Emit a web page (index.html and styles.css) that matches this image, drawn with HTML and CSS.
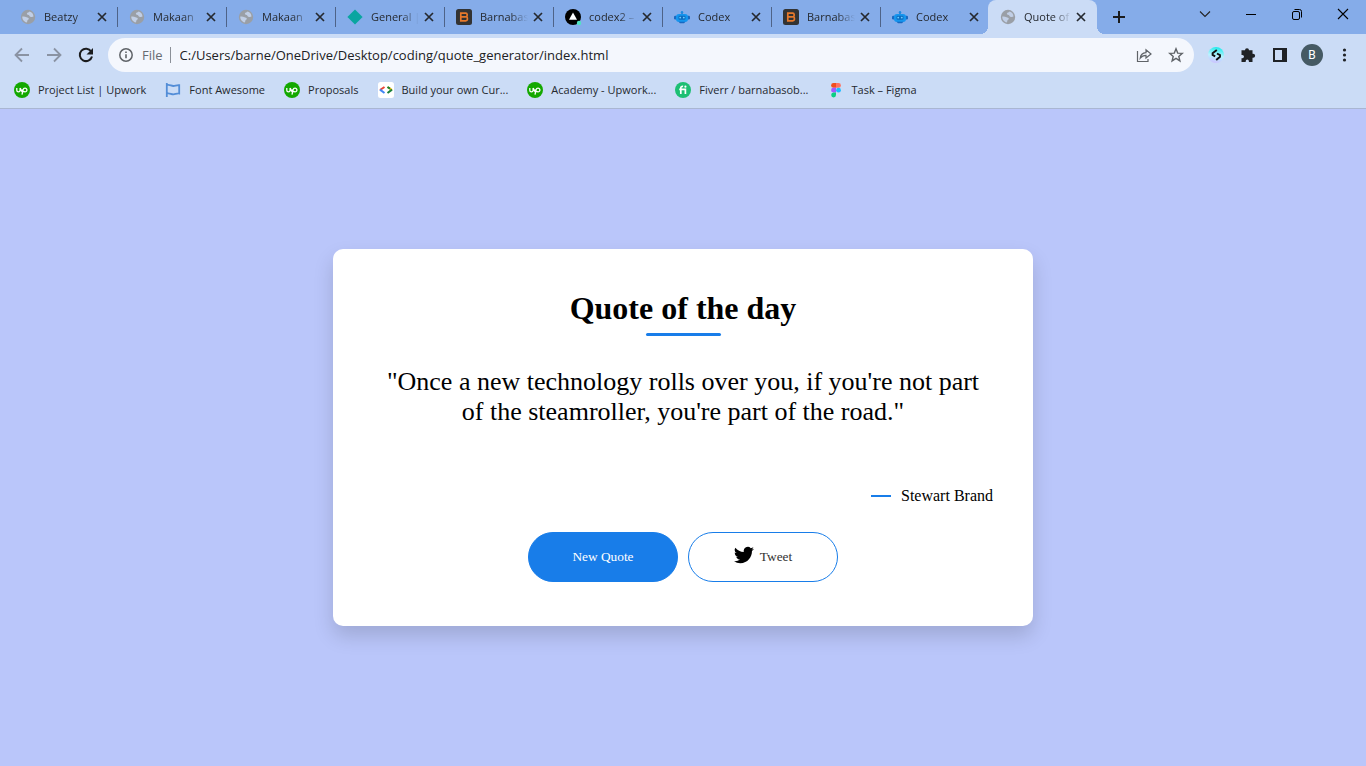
FILE: index.html
```html
<!DOCTYPE html>
<html lang="en">
<head>
<meta charset="utf-8">
<title>Quote of the day</title>
<link rel="stylesheet" href="styles.css">
</head>
<body>
<svg class="sprite" aria-hidden="true">
  <symbol id="globe" viewBox="0 0 16 16"><circle cx="8" cy="8" r="7.2" fill="#9a9fa6"/><path d="M2.300 7.600c1.700-.4 3 .2 4.200.7 1 .4 2.300.3 2.300 1.400 0 1-1.200 1-1.400 1.900-.1.800-.1 1.500-.8 2C4 12.800 2 10.400 2.300 7.600zM9.600 2.600c-.5.9-2.400.8-2.700 1.900-.2 1 .9 1.300 1.700 1.500.9.300.6 1.400 1.600 1.700 1.200.3 2.100.5 3.300-.1C13.400 5 12 3.200 9.600 2.600z" fill="#cbdbf6" opacity=".8"/></symbol>
  <symbol id="diamond" viewBox="0 0 16 16"><path d="M8 .4 15.600 8 8 15.600.4 8z" fill="#0aa5a0"/></symbol>
  <symbol id="bold-b" viewBox="0 0 16 16"><rect width="16" height="16" rx="2.500" fill="#333"/><path d="M4.800 4.200h5c1.600 0 1.900 2.600.6 3.600 1.600.8 1.400 4-.6 4h-5zM4.800 7.900h5" fill="none" stroke="#e8792b" stroke-width="1.700"/></symbol>
  <symbol id="triangle" viewBox="0 0 16 16"><circle cx="8" cy="8" r="8" fill="#000"/><path d="M8 3.500 12 10.800H4z" fill="#fff"/><circle cx="14" cy="14" r="2.200" fill="#50e3c2"/></symbol>
  <symbol id="robot" viewBox="0 0 16 16"><path d="M7.400 3h1.200v3H7.400z" fill="#1769c2"/><circle cx="8" cy="3.200" r="1.200" fill="#1c8be0"/><rect x="0" y="6.800" width="3" height="3.600" rx="1.200" fill="#1769c2"/><rect x="13" y="6.800" width="3" height="3.600" rx="1.200" fill="#1769c2"/><rect x="2" y="5" width="12" height="8" rx="3" fill="#1595ee"/><rect x="4.500" y="6.800" width="7" height="4" rx="1.200" fill="#0f6cc0"/><circle cx="6.200" cy="8.600" r=".9" fill="#6fd0ff"/><circle cx="9.800" cy="8.600" r=".9" fill="#6fd0ff"/><path d="M4.500 12.800h7l-1.500 1.400H6z" fill="#1769c2"/></symbol>
  <symbol id="close" viewBox="0 0 16 16"><path d="M4 4l8 8M12 4l-8 8" stroke="currentColor" stroke-width="1.700"/></symbol>
  <symbol id="upwork" viewBox="0 0 16 16"><circle cx="8" cy="8" r="8" fill="#14a800"/><path d="M2.800 6v2.200a1.600 1.600 0 0 0 3.300 0V6M6.200 6c.5 1.700 1.200 3 2.200 3.900M8 12.600l1-4.700c.3-1.200 1-1.800 2-1.800a1.900 1.900 0 1 1 0 3.800c-1.200 0-2.300-.9-3.400-2.300" fill="none" stroke="#fff" stroke-width="1.300"/></symbol>
  <symbol id="flag" viewBox="0 0 16 16"><path d="M1.800 1v14M1.800 3.200c2.400-1 4.400.9 6.600.8 2-.1 3.400-1.200 5.800-.9v8.400c-2.400-.3-3.800.8-5.800.9-2.200.1-4.200-1.800-6.600-.8" fill="none" stroke="#538dd7" stroke-width="1.800"/></symbol>
  <symbol id="code" viewBox="0 0 16 16"><rect width="16" height="16" rx="2.500" fill="#fff"/><g fill="none" stroke-width="2"><path d="M6.500 5 2 8" stroke="#ea4335"/><path d="M2 7.600 6.500 11" stroke="#4285f4"/><path d="M9.500 5 14 8" stroke="#fbbc04"/><path d="M9.500 5 12 6.700M14 7.600 9.500 11" stroke="#188038"/></g></symbol>
  <symbol id="fiverr" viewBox="0 0 16 16"><circle cx="8" cy="8" r="8" fill="#1dbf73"/><path d="M5.800 12V6.200c0-1.500.9-2 2.300-1.800M4.200 7.400h6.200V12" fill="none" stroke="#fff" stroke-width="1.700"/><circle cx="10.400" cy="4.700" r="1.100" fill="#fff"/></symbol>
  <symbol id="figma" viewBox="0 0 16 16"><path d="M8 1H5.500a2.400 2.400 0 0 0 0 4.800H8z" fill="#f24e1e"/><path d="M8 1h2.500a2.400 2.400 0 0 1 0 4.800H8z" fill="#ff7262"/><path d="M8 5.800H5.500a2.400 2.400 0 0 0 0 4.800H8z" fill="#a259ff"/><circle cx="10.500" cy="8.200" r="2.400" fill="#1abcfe"/><path d="M8 10.600H5.500A2.400 2.400 0 1 0 8 13z" fill="#0acf83"/></symbol>
</svg>

<header class="browser">
  <div class="tabstrip">
    <div class="tabs">
      <div class="tab"><svg class="icon"><use href="#globe"/></svg><span class="tab-title">Beatzy</span><button class="tab-close" aria-label="Close Beatzy"><svg class="icon"><use href="#close"/></svg></button></div>
      <div class="tab"><svg class="icon"><use href="#globe"/></svg><span class="tab-title">Makaan</span><button class="tab-close" aria-label="Close Makaan"><svg class="icon"><use href="#close"/></svg></button></div>
      <div class="tab"><svg class="icon"><use href="#globe"/></svg><span class="tab-title">Makaan</span><button class="tab-close" aria-label="Close Makaan"><svg class="icon"><use href="#close"/></svg></button></div>
      <div class="tab"><svg class="icon"><use href="#diamond"/></svg><span class="tab-title">General |</span><button class="tab-close" aria-label="Close General"><svg class="icon"><use href="#close"/></svg></button></div>
      <div class="tab"><svg class="icon"><use href="#bold-b"/></svg><span class="tab-title">Barnabas</span><button class="tab-close" aria-label="Close Barnabas"><svg class="icon"><use href="#close"/></svg></button></div>
      <div class="tab"><svg class="icon"><use href="#triangle"/></svg><span class="tab-title">codex2 –</span><button class="tab-close" aria-label="Close codex2"><svg class="icon"><use href="#close"/></svg></button></div>
      <div class="tab"><svg class="icon"><use href="#robot"/></svg><span class="tab-title">Codex</span><button class="tab-close" aria-label="Close Codex"><svg class="icon"><use href="#close"/></svg></button></div>
      <div class="tab"><svg class="icon"><use href="#bold-b"/></svg><span class="tab-title">Barnabas</span><button class="tab-close" aria-label="Close Barnabas"><svg class="icon"><use href="#close"/></svg></button></div>
      <div class="tab before-active"><svg class="icon"><use href="#robot"/></svg><span class="tab-title">Codex</span><button class="tab-close" aria-label="Close Codex"><svg class="icon"><use href="#close"/></svg></button></div>
      <div class="tab active"><svg class="icon"><use href="#globe"/></svg><span class="tab-title">Quote of</span><button class="tab-close" aria-label="Close Quote of the day"><svg class="icon"><use href="#close"/></svg></button></div>
    </div>
    <button class="new-tab" aria-label="New tab"><svg class="icon" viewBox="0 0 16 16"><path d="M8 2v12M2 8h12" stroke="#1b1c1e" stroke-width="2"/></svg></button>
    <div class="window-controls">
      <button aria-label="Search tabs"><svg class="icon" viewBox="0 0 16 16"><path d="M3 5.500l5 5 5-5" fill="none" stroke="#222" stroke-width="1.100"/></svg></button>
      <button aria-label="Minimize"><svg class="icon" viewBox="0 0 16 16"><path d="M3 8.500h10" stroke="#000"/></svg></button>
      <button aria-label="Restore"><svg class="icon" viewBox="0 0 16 16"><rect x="3.500" y="5.500" width="7" height="8" rx="1.500" fill="none" stroke="#000"/><path d="M5.500 3.500h5a2 2 0 0 1 2 2v6" fill="none" stroke="#000"/></svg></button>
      <button aria-label="Close window"><svg class="icon" viewBox="0 0 16 16"><path d="M3 3l10 10M13 3 3 13" stroke="#000" stroke-width="1.100"/></svg></button>
    </div>
  </div>

  <div class="toolbar">
    <div class="tools">
      <button aria-label="Back"><svg class="icon" viewBox="0 0 16 16"><path d="M15 8H2M8 1.500 1.500 8 8 14.500" fill="none" stroke="#8a93a3" stroke-width="1.800"/></svg></button>
      <button aria-label="Forward"><svg class="icon" viewBox="0 0 16 16"><path d="M1 8h13M8 1.500 14.500 8 8 14.500" fill="none" stroke="#8a93a3" stroke-width="1.800"/></svg></button>
      <button aria-label="Reload"><svg class="icon" viewBox="0 0 16 16"><path d="M13.200 4.500A6.200 6.200 0 1 0 14 9.500" fill="none" stroke="#1b1c1e" stroke-width="2"/><path d="M15 1v6.500H8.500z" fill="#1b1c1e"/></svg></button>
    </div>
    <div class="omnibox">
      <svg class="icon" viewBox="0 0 16 16"><circle cx="8" cy="8" r="6.200" fill="none" stroke="#5f6368" stroke-width="1.500"/><path d="M8 7.200v4M8 4.400v1.600" stroke="#5f6368" stroke-width="1.600"/></svg>
      <label class="scheme" for="url">File</label>
      <input class="url" id="url" type="text" value="C:/Users/barne/OneDrive/Desktop/coding/quote_generator/index.html">
      <div class="tools">
        <button aria-label="Share"><svg class="icon" viewBox="0 0 16 16"><path d="M1.500 4v10.500h10.500V12" fill="none" stroke="#5f6368" stroke-width="1.200"/><path d="M4.200 11.200c.4-3.600 2.400-5.400 5.800-5.600V2.800L15 7l-5 4V8.400c-2.600 0-4.400.9-5.800 2.800z" fill="none" stroke="#5f6368" stroke-width="1.200"/></svg></button>
        <button aria-label="Bookmark"><svg class="icon" viewBox="0 0 16 16"><path d="M8 1.800l1.700 4.300 4.600.3-3.500 3 1.100 4.500L8 11.400l-3.900 2.500 1.100-4.500-3.500-3 4.600-.3z" fill="none" stroke="#5f6368" stroke-width="1.400"/></svg></button>
      </div>
    </div>
    <div class="tools">
      <button aria-label="Extension"><svg class="icon" viewBox="0 0 16 16"><defs><linearGradient id="ext" x1=".2" y1="1" x2=".4" y2="0"><stop offset="0" stop-color="#cdbcff"/><stop offset=".5" stop-color="#b9f3ff"/><stop offset="1" stop-color="#25ecec"/></linearGradient></defs><circle cx="8" cy="8" r="8" fill="url(#ext)"/><path d="M8.800 3 4.600 6.300v1.600l2.600 1.500M8.200 13l3.800-3.200V8.100L9 6.500" fill="none" stroke="#111" stroke-width="1.900"/></svg></button>
      <button aria-label="Extensions"><svg class="icon" viewBox="0 0 16 16"><path d="M5 3.200a2 2 0 0 1 4 0h3.500v3.600h.6a2 2 0 0 1 0 4h-.6V15H8.900v-.8a1.600 1.600 0 0 0-3.200 0v.8H1.500v-3.700h.8a1.700 1.700 0 0 0 0-3.400h-.8V3.200z" fill="#1f2226"/></svg></button>
      <button aria-label="Side panel"><svg class="icon" viewBox="0 0 16 16"><path d="M1 1h14v14H1zM3 3v10h7V3z" fill="#1f2226" fill-rule="evenodd"/></svg></button>
      <button class="profile" aria-label="Profile"><span class="avatar">B</span></button>
      <button aria-label="Menu"><svg class="icon" viewBox="0 0 16 16"><g fill="#1f2226"><circle cx="8.500" cy="3" r="1.600"/><circle cx="8.500" cy="8" r="1.600"/><circle cx="8.500" cy="13" r="1.600"/></g></svg></button>
    </div>
  </div>

  <nav class="bookmarks">
    <a href="#"><svg class="icon"><use href="#upwork"/></svg>Project List | Upwork</a>
    <a href="#"><svg class="icon"><use href="#flag"/></svg>Font Awesome</a>
    <a href="#"><svg class="icon"><use href="#upwork"/></svg>Proposals</a>
    <a href="#"><svg class="icon"><use href="#code"/></svg>Build your own Cur...</a>
    <a href="#"><svg class="icon"><use href="#upwork"/></svg>Academy - Upwork...</a>
    <a href="#"><svg class="icon"><use href="#fiverr"/></svg>Fiverr / barnabasob...</a>
    <a href="#"><svg class="icon"><use href="#figma"/></svg>Task – Figma</a>
  </nav>
</header>

<main class="page">
  <section class="quote-card">
    <h1>Quote of the day</h1>
    <blockquote>"Once a new technology rolls over you, if you're not part of the steamroller, you're part of the road."</blockquote>
    <p class="author">Stewart Brand</p>
    <div class="actions">
      <button class="pill primary">New Quote</button>
      <button class="pill"><svg class="bird" viewBox="0 0 24 24"><path d="M23.950 4.570a10 10 0 0 1-2.820.770 4.960 4.960 0 0 0 2.160-2.720c-.95.550-2.010.960-3.130 1.180a4.920 4.920 0 0 0-8.390 4.480C7.690 8.090 4.070 6.130 1.640 3.160a4.930 4.930 0 0 0 1.520 6.570 4.900 4.900 0 0 1-2.230-.610v.060a4.920 4.920 0 0 0 3.950 4.830 5 5 0 0 1-2.210.080 4.940 4.940 0 0 0 4.600 3.420A9.870 9.870 0 0 1 0 19.540a14 14 0 0 0 7.550 2.210c9.050 0 14-7.500 14-13.990 0-.210 0-.420-.020-.630a9.940 9.940 0 0 0 2.460-2.550z"/></svg>Tweet</button>
    </div>
  </section>
</main>
</body>
</html>
```
FILE: styles.css
```css
* {
  box-sizing: border-box;
  margin: 0;
}

body {
  display: flex;
  flex-direction: column;
  min-height: 100vh;
  background: #bac6fa;
  font-family: "Liberation Serif", "Times New Roman", serif;
}

button {
  border: 0;
  padding: 0;
  background: none;
  color: inherit;
  cursor: pointer;
}

.sprite {
  position: absolute;
  width: 0;
  height: 0;
}

.icon {
  display: block;
  flex: none;
  width: 16px;
  height: 16px;
}

/* Browser chrome */
.browser {
  background: #cbdcf6;
  border-bottom: 1px solid #a9b6d2;
  color: #25292f;
  font: 11px/14px "Open Sans", "Segoe UI", sans-serif;
}

.tabstrip {
  display: flex;
  align-items: center;
  height: 34px;
  padding-left: 9px;
  background: #85ace9;
}

.tabs {
  display: flex;
  align-self: stretch;
}

.tab {
  display: flex;
  align-items: center;
  width: 109px;
  padding: 0 7px 0 11px;
  background: linear-gradient(#4e6388, #4e6388) right center / 1px 20px no-repeat;
}

.tab-title {
  width: 50px;
  margin-left: 8px;
  overflow: hidden;
  white-space: nowrap;
  mask-image: linear-gradient(90deg, #000 60%, transparent 96%);
}

.tab.before-active {
  width: 107px;
  padding-right: 5px;
  background: none;
}

.tab.active {
  position: relative;
  padding: 0 8px 0 12px;
  border-radius: 8px 8px 0 0;
  background: #cbdcf6;
}

.tab.active::before,
.tab.active::after {
  content: "";
  position: absolute;
  bottom: 0;
  width: 8px;
  height: 8px;
}

.tab.active::before {
  right: 100%;
  background: radial-gradient(circle at 0 0, transparent 8px, #cbdcf6 8px);
}

.tab.active::after {
  left: 100%;
  background: radial-gradient(circle at 100% 0, transparent 8px, #cbdcf6 8px);
}

.new-tab {
  margin-left: 14px;
}

.window-controls {
  display: flex;
  margin-left: auto;
  align-self: flex-start;
}

.window-controls button {
  display: grid;
  place-items: center;
  width: 46px;
  height: 28px;
}

.toolbar {
  display: flex;
  gap: 6px;
  padding: 4px 6px 0;
}

.tools {
  display: flex;
}

.tools button {
  display: grid;
  place-items: center;
  width: 32px;
}

.omnibox {
  display: flex;
  flex: 1;
  align-items: center;
  height: 34px;
  padding: 0 2px 0 10px;
  border-radius: 17px;
  background: #f4f7fd;
}

.scheme {
  margin-left: 8px;
  padding-right: 7px;
  border-right: 1px solid #8b9098;
  color: #676b71;
  font-size: 13px;
  line-height: 16px;
}

.url {
  flex: 1;
  min-width: 0;
  padding: 0 9px;
  border: 0;
  outline: 0;
  background: none;
  color: #202124;
  font: 13px "Open Sans", "Segoe UI", sans-serif;
}

.avatar {
  display: grid;
  place-items: center;
  width: 22px;
  height: 22px;
  border-radius: 50%;
  background: #455a64;
  color: #fff;
  font: 12px Roboto, sans-serif;
}

.bookmarks {
  display: flex;
  align-items: center;
  gap: 19px;
  height: 36px;
  padding: 0 14px;
}

.bookmarks a {
  display: flex;
  align-items: center;
  gap: 8px;
  color: inherit;
  text-decoration: none;
  white-space: nowrap;
}

/* Quote page */
.page {
  display: grid;
  flex: 1;
  place-items: center;
}

.quote-card {
  width: 700px;
  max-width: 100%;
  padding: 41px 40px 44px;
  border-radius: 10px;
  background: #fff;
  box-shadow: 0 10px 20px rgba(0, 0, 0, 0.15);
  text-align: center;
}

h1 {
  font-size: 32px;
  line-height: 37px;
}

h1::after {
  content: "";
  display: block;
  width: 75px;
  height: 3px;
  margin: 6px auto 0;
  border-radius: 3px;
  background: #187de9;
}

blockquote {
  margin-top: 31px;
  font-size: 26px;
  line-height: 30px;
}

.author {
  display: flex;
  align-items: center;
  justify-content: flex-end;
  gap: 10px;
  margin-top: 60px;
  font-size: 16px;
  line-height: 18px;
}

.author::before {
  content: "";
  width: 20px;
  height: 2px;
  background: #187de9;
}

.actions {
  display: flex;
  justify-content: center;
  gap: 10px;
  margin-top: 27px;
}

.pill {
  display: flex;
  align-items: center;
  justify-content: center;
  gap: 6px;
  width: 150px;
  height: 50px;
  border: 1px solid #187de9;
  border-radius: 25px;
  background: #fff;
  color: #333;
  font-family: inherit;
}

.pill.primary {
  background: #187de9;
  color: #fff;
}

.bird {
  width: 20px;
  height: 20px;
  margin-bottom: 5px;
  fill: #000;
}
```
